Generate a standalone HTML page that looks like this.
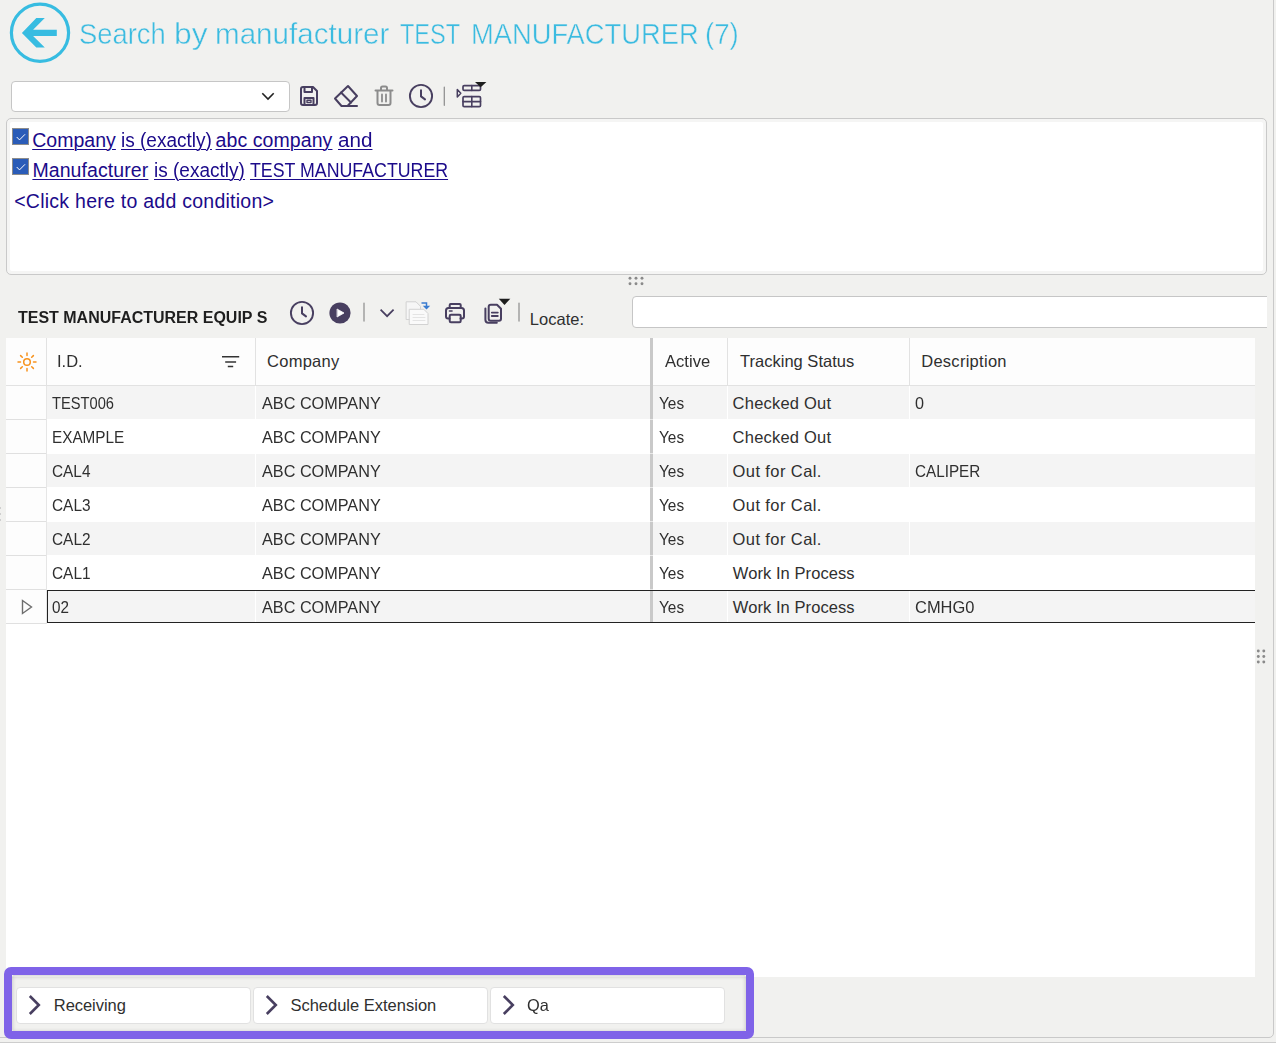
<!DOCTYPE html>
<html lang="en"><head><meta charset="utf-8"><title>Search by manufacturer</title>
<style>
html,body{margin:0;padding:0;}
body{background:#f1f1ef;font-family:"Liberation Sans",sans-serif;overflow:hidden;}
#app{position:relative;width:1276px;height:1043px;overflow:hidden;background:#f1f1ef;}
#app *{box-sizing:border-box;}
.a{position:absolute;}
.t{position:absolute;white-space:nowrap;transform-origin:0 50%;font-family:"Liberation Sans",sans-serif;}
.ttl{color:#3bbbe0;-webkit-text-stroke:0.45px #f1f1ef;}
.lnk{color:#1b0a8a;}
.u{text-decoration:underline;text-decoration-thickness:1px;text-underline-offset:2px;}
.cap{color:#1e1e1e;font-weight:bold;}
.g{color:#2f2f2f;}
.frame{left:-6px;top:-6px;width:1280px;height:1044px;border:1px solid #c9c9c9;border-radius:5px;}
.botline{left:0;top:1042px;width:1276px;height:1px;background:#cdcdcd;}
.dd{left:11px;top:81px;width:279px;height:31px;background:#fff;border:1px solid #c6c6c6;border-radius:4px;}
.cond{left:6px;top:118px;width:1261px;height:157px;background:#f5f5f4;border:1px solid #c9c9c9;border-radius:5px;}
.cond i{position:absolute;left:3px;top:3px;right:3px;bottom:3px;background:#fff;border-radius:2px;}
.cb{width:17px;height:17px;background:#2a5cb8;border:1px solid #8c8c8c;}
.loc{left:632px;top:296px;width:640px;height:32px;background:#fff;border:1px solid #c6c6c6;border-radius:4px;}
.locclip{left:632px;top:290px;width:635px;height:44px;overflow:hidden;}
.grid{left:6px;top:338px;width:1249px;height:639px;background:#fff;}
.hdr{left:0;top:0;width:1249px;height:48px;background:#fdfdfd;border-bottom:1px solid #e2e2e2;}
.vs{top:0;width:1px;height:47px;background:#e2e2e2;}
.row{left:41px;width:1208px;height:33px;}
.alt{background:#f4f4f4;}
.ind{left:0;top:48px;width:40px;height:238px;background:#fdfdfd;}
.indl{left:0;width:40px;height:1px;background:#e0e0e0;}
.freeze{left:644px;top:0;width:3px;height:285px;background:#c9c9c9;}
.sel{left:41px;top:252px;width:1208px;height:33px;border:1px solid #222;border-right:none;}
.pur{left:4px;top:967px;width:750px;height:72px;border:8px solid #7f63e8;border-radius:7px;}
.purin{left:12px;top:975px;width:734px;height:56px;box-shadow:inset 0 1px 4px rgba(0,0,0,.22);border-radius:2px;}
.btn{top:987px;width:235px;height:37px;background:#fff;border:1px solid #e1e1e1;border-radius:4px;}
svg{position:absolute;overflow:visible;}

</style></head>
<body>
<div id="app">
<div class="a frame"></div>
<div class="a botline"></div>

<!-- back button -->
<svg style="left:8px;top:0px;filter:blur(0.45px)" width="66" height="66" viewBox="8 0 66 66">
  <circle cx="40" cy="32.750" r="28.600" fill="none" stroke="#37bce1" stroke-width="3.200"/>
  <path d="M56.800 29.700 H33.100 L44.800 18 H36.300 L21.900 32.900 L36.300 47.500 H44.800 L33.100 36.100 H56.800 Z" fill="#37bce1"/>
</svg>

<!-- dropdown -->
<div class="a dd"></div>
<svg style="left:260px;top:90px" width="16" height="12" viewBox="260 90 16 12"><path d="M262.3 93.2 L268 99 L273.7 93.2" fill="none" stroke="#222" stroke-width="1.6"/></svg>

<!-- toolbar 1 icons -->
<svg style="left:296px;top:80px" width="196" height="32" viewBox="296 80 196 32" fill="none" stroke="#483f60" stroke-width="2" stroke-linejoin="round" stroke-linecap="round">
  <!-- save -->
  <path d="M301 89 a2 2 0 0 1 2 -2 h10 l4 4 v12 a2 2 0 0 1 -2 2 h-12 a2 2 0 0 1 -2 -2 z"/>
  <path d="M304.5 87.5 v4.5 h7.5 v-4.5"/>
  <path d="M304.5 104.5 v-6.5 h9 v6.5"/>
  <rect x="307" y="100.3" width="4" height="2.2" stroke-width="1.4"/>
  <!-- eraser -->
  <path d="M348 86 L357 96 L347.5 106 H341.5 L335 98.5 Z"/>
  <path d="M341 92.5 L351 102.5"/>
  <path d="M347 106 H357"/>
  <!-- trash -->
  <g stroke="#8c8c8c">
  <path d="M375.5 90.5 h17"/>
  <path d="M381 90 v-2 a1.5 1.5 0 0 1 1.5 -1.5 h3 a1.5 1.5 0 0 1 1.5 1.5 v2"/>
  <path d="M377.5 91 v12 a2 2 0 0 0 2 2 h9 a2 2 0 0 0 2 -2 v-12"/>
  <path d="M382 94.5 v7 M386 94.5 v7" stroke-width="1.8"/>
  </g>
  <!-- clock -->
  <circle cx="421" cy="96" r="11.100" stroke-width="1.900"/>
  <path d="M421 90.200 V96.400 L425 99.400" stroke-width="2"/>
  <!-- sep -->
  <path d="M444.3 87 V105.3" stroke="#8f8f8f" stroke-width="1.250"/>
  <!-- table icon -->
  <path d="M457.300 89.500 L460.800 93.300 L457.300 97 Z" stroke-width="1.500" />
  <rect x="463" y="85.6" width="17.5" height="4.8" rx="1.2" stroke-width="1.700"/>
  <path d="M471.8 85.6 v4.8" stroke-width="1.600"/>
  <rect x="463" y="96.6" width="17.5" height="10" rx="1.2" stroke-width="1.700"/>
  <path d="M471.8 96.6 v10 M463 101.6 h17.5" stroke-width="1.600"/>
  <path d="M475 82 H486.4 L480.7 87.2 Z" fill="#1d1d1d" stroke="none"/>
</svg>

<!-- condition box -->
<div class="a cond"><i></i></div>
<div class="a cb" style="left:12px;top:128px"></div>
<div class="a cb" style="left:12px;top:158px"></div>
<svg style="left:12px;top:128px" width="17" height="47" viewBox="0 0 17 47" fill="none" stroke="#fff" stroke-width="1">
  <path d="M4.700 9 L7.500 11.900 L13 6.300"/>
  <path d="M4.700 39 L7.500 41.900 L13 36.300"/>
</svg>

<!-- splitter dots -->
<div class="a" style="left:0;top:507px;width:1px;height:2px;background:#cfcfcf"></div>
<div class="a" style="left:0;top:513px;width:1px;height:2px;background:#cfcfcf"></div>
<div class="a" style="left:0;top:519px;width:1px;height:2px;background:#cfcfcf"></div>
<svg style="left:626px;top:275px" width="20" height="12" viewBox="626 275 20 12" fill="#8a8a8a">
  <circle cx="630" cy="278.3" r="1.450"/><circle cx="636" cy="278.3" r="1.450"/><circle cx="642" cy="278.3" r="1.450"/>
  <circle cx="630" cy="283.8" r="1.450"/><circle cx="636" cy="283.8" r="1.450"/><circle cx="642" cy="283.8" r="1.450"/>
</svg>
<svg style="left:1255px;top:646px" width="12" height="20" viewBox="1255 646 12 20" fill="#8a8a8a">
  <circle cx="1258.3" cy="651" r="1.450"/><circle cx="1263.8" cy="651" r="1.450"/>
  <circle cx="1258.3" cy="656.5" r="1.450"/><circle cx="1263.8" cy="656.5" r="1.450"/>
  <circle cx="1258.3" cy="662" r="1.450"/><circle cx="1263.8" cy="662" r="1.450"/>
</svg>

<!-- toolbar 2 icons -->
<svg style="left:286px;top:296px" width="240" height="32" viewBox="286 296 240 32" fill="none" stroke="#483f60" stroke-width="2" stroke-linejoin="round" stroke-linecap="round">
  <circle cx="302" cy="313" r="11.100" stroke-width="1.900"/>
  <path d="M302 307.200 V313.400 L306 316.400" stroke-width="2"/>
  <circle cx="340" cy="313" r="10.6" fill="#483f60" stroke="none"/>
  <path d="M337.400 309.200 L344 313 L337.400 316.800 Z" fill="#fff" stroke="#fff" stroke-width="0.800"/>
  <path d="M364 303 V321" stroke="#8f8f8f" stroke-width="1.250"/>
  <path d="M380.6 309.6 L387.1 316.2 L393.6 309.6" stroke-width="1.7" stroke-linejoin="miter" stroke-linecap="butt"/>
  <!-- disabled paste -->
  <g stroke="#d2d2d2" stroke-width="1" fill="#f6f6f6">
    <path d="M406.5 301.8 h9.5 l4.5 4.5 v13.2 h-14 z"/>
    <path d="M409.600 309.300 h14.200 l4.200 4.200 v11 h-18.400 z" fill="#fafafa"/>
    <path d="M413 314.5 h11 M413 317.5 h12 M413 320.5 h12" stroke="#e4e4e4"/>
  </g>
  <path d="M421.5 303 h5 v4" stroke="#3a7bd0" stroke-width="1.5" stroke-linecap="butt" stroke-linejoin="miter"/>
  <path d="M422.8 305.8 h7.4 l-3.7 3.6 z" fill="#3a7bd0" stroke="none"/>
  <!-- printer -->
  <path d="M449.700 307.600 v-2.600 a1 1 0 0 1 1 -1 h9 a1 1 0 0 1 1 1 v2.600"/>
  <path d="M449.5 318.5 h-1.5 a2 2 0 0 1 -2 -2 v-6 a2.5 2.5 0 0 1 2.5 -2.5 h13 a2.5 2.5 0 0 1 2.5 2.5 v6 a2 2 0 0 1 -2 2 h-1.500"/>
  <rect x="449.700" y="314.800" width="11" height="7.400" rx="1.300"/>
  <path d="M449.5 311 h2.500" stroke-width="1.600"/>
  <!-- copy -->
  <path d="M485.400 308.600 v11.200 a3 3 0 0 0 3 3 h8.400"/>
  <path d="M488.700 306.700 a2 2 0 0 1 2 -2 h6.300 l4 4 v10 a2 2 0 0 1 -2 2 h-8.300 a2 2 0 0 1 -2 -2 z"/>
  <path d="M491.800 312.600 h6 M491.800 316 h6" stroke-width="1.800"/>
  <path d="M498.800 298.800 H510.300 L504.500 305 Z" fill="#1d1d1d" stroke="none"/>
  <path d="M519 303 V321" stroke="#8f8f8f" stroke-width="1.250"/>
</svg>

<div class="a locclip"><div class="a loc" style="left:0;top:6px"></div></div>

<!-- grid -->
<div class="a grid">
  <div class="a hdr"></div>
  <div class="a vs" style="left:40px"></div>
  <div class="a vs" style="left:249px"></div>
  <div class="a vs" style="left:721px"></div>
  <div class="a vs" style="left:903px"></div>
  <div class="a ind"></div>
  <div class="a row alt" style="top:48px"></div>
  <div class="a row alt" style="top:116px"></div>
  <div class="a row alt" style="top:184px"></div>
  <div class="a row alt" style="top:252px"></div>
  <div class="a indl" style="top:81px"></div>
  <div class="a indl" style="top:115px"></div>
  <div class="a indl" style="top:149px"></div>
  <div class="a indl" style="top:183px"></div>
  <div class="a indl" style="top:217px"></div>
  <div class="a indl" style="top:251px"></div>
  <div class="a indl" style="top:285px"></div>
  <div class="a" style="left:40px;top:48px;width:1px;height:238px;background:#e6e6e6"></div>
  <div class="a" style="left:249px;top:48px;width:1px;height:238px;background:#fff"></div>
  <div class="a" style="left:721px;top:48px;width:1px;height:238px;background:#fff"></div>
  <div class="a" style="left:903px;top:48px;width:1px;height:238px;background:#fff"></div>
  <div class="a freeze"></div>
  <div class="a" style="left:644px;top:81px;width:3px;height:1px;background:#e9e9e9"></div>
  <div class="a" style="left:644px;top:115px;width:3px;height:1px;background:#e9e9e9"></div>
  <div class="a" style="left:644px;top:149px;width:3px;height:1px;background:#e9e9e9"></div>
  <div class="a" style="left:644px;top:183px;width:3px;height:1px;background:#e9e9e9"></div>
  <div class="a" style="left:644px;top:217px;width:3px;height:1px;background:#e9e9e9"></div>
  <div class="a" style="left:644px;top:251px;width:3px;height:1px;background:#e9e9e9"></div>
  
  <div class="a sel"></div>
</div>
<!-- sun icon -->
<svg style="left:15.5px;top:350.5px" width="22" height="22" viewBox="-11 -11 22 22" fill="none" stroke="#f7931e" stroke-width="1.5" stroke-linecap="round">
  <circle cx="0" cy="0" r="3.3"/>
  <path d="M0 -9 V-6.500 M0 9 V6.500 M-9 0 H-6.500 M9 0 H6.500 M-6.400 -6.400 L-4.700 -4.700 M6.400 6.400 L4.700 4.700 M-6.400 6.400 L-4.700 4.700 M6.400 -6.400 L4.700 -4.700"/>
</svg>
<!-- filter icon -->
<svg style="left:220px;top:352px" width="22" height="18" viewBox="220 352 22 18" fill="none" stroke="#333" stroke-width="1.5">
  <path d="M222 356.800 H239.200 M225.200 362 H236.100 M227.800 366.600 H233.200"/>
</svg>
<!-- row indicator -->
<svg style="left:20px;top:598px" width="14" height="18" viewBox="20 598 14 18" fill="none" stroke="#6e6e6e" stroke-width="1.400">
  <path d="M22.500 600.500 L31.500 607 L22.500 613.500 Z"/>
</svg>

<!-- bottom highlighted panel -->
<div class="a purin"></div>
<div class="a btn" style="left:16px"></div>
<div class="a btn" style="left:253px"></div>
<div class="a btn" style="left:490px"></div>
<div class="a pur"></div>
<svg style="left:0;top:990px" width="760" height="30" viewBox="0 990 760 30" fill="none" stroke="#483f60" stroke-width="2.600">
  <path d="M29.800 996 L38.800 1005 L29.800 1014"/>
  <path d="M266.800 996 L275.800 1005 L266.800 1014"/>
  <path d="M503.800 996 L512.800 1005 L503.800 1014"/>
</svg>

<span class="t ttl" style="left:78.80px;top:17px;font-size:30px;line-height:33px;transform:scaleX(0.9131);">Search</span>
<span class="t ttl" style="left:173.80px;top:17px;font-size:30px;line-height:33px;transform:scaleX(1.0603);">by</span>
<span class="t ttl" style="left:214.60px;top:17px;font-size:30px;line-height:33px;transform:scaleX(0.9862);">manufacturer</span>
<span class="t ttl" style="left:400.00px;top:17px;font-size:30px;line-height:33px;transform:scaleX(0.7841);">TEST</span>
<span class="t ttl" style="left:470.60px;top:17px;font-size:30px;line-height:33px;transform:scaleX(0.9106);">MANUFACTURER</span>
<span class="t ttl" style="left:705.00px;top:17px;font-size:30px;line-height:33px;transform:scaleX(0.9216);">(7)</span>
<span class="t lnk u" style="left:32.20px;top:129px;font-size:19.5px;line-height:22px;letter-spacing:0.033px;">Company</span>
<span class="t lnk u" style="left:120.60px;top:129px;font-size:19.5px;line-height:22px;transform:scaleX(0.9759);">is (exactly)</span>
<span class="t lnk u" style="left:215.60px;top:129px;font-size:19.5px;line-height:22px;letter-spacing:0.080px;">abc company</span>
<span class="t lnk u" style="left:337.60px;top:129px;font-size:19.5px;line-height:22px;transform:scaleX(1.0583);">and</span>
<span class="t lnk u" style="left:32.40px;top:159px;font-size:19.5px;line-height:22px;letter-spacing:0.091px;">Manufacturer</span>
<span class="t lnk u" style="left:153.60px;top:159px;font-size:19.5px;line-height:22px;transform:scaleX(0.9759);">is (exactly)</span>
<span class="t lnk u" style="left:249.60px;top:159px;font-size:19.5px;line-height:22px;transform:scaleX(0.9111);">TEST MANUFACTURER</span>
<span class="t lnk" style="left:14.20px;top:190px;font-size:19.5px;line-height:22px;letter-spacing:0.257px;">&lt;Click here to add condition&gt;</span>
<span class="t cap" style="left:18.00px;top:309px;font-size:16px;line-height:17px;transform:scaleX(0.9992);">TEST MANUFACTURER EQUIP S</span>
<span class="t g" style="left:529.80px;top:310px;font-size:16.5px;line-height:18px;letter-spacing:0.033px;">Locate:</span>
<span class="t g" style="left:57.40px;top:352px;font-size:16.5px;line-height:18px;transform:scaleX(1.0009);">I.D.</span>
<span class="t g" style="left:267.00px;top:352px;font-size:16.5px;line-height:18px;letter-spacing:0.267px;">Company</span>
<span class="t g" style="left:665.00px;top:352px;font-size:16.5px;line-height:18px;transform:scaleX(1.0047);">Active</span>
<span class="t g" style="left:740.00px;top:352px;font-size:16.5px;line-height:18px;letter-spacing:0.014px;">Tracking Status</span>
<span class="t g" style="left:921.20px;top:352px;font-size:16.5px;line-height:18px;letter-spacing:0.280px;">Description</span>
<span class="t g" style="left:52.20px;top:394px;font-size:16.5px;line-height:18px;transform:scaleX(0.8887);">TEST006</span>
<span class="t g" style="left:261.60px;top:394px;font-size:16.5px;line-height:18px;transform:scaleX(0.9835);">ABC COMPANY</span>
<span class="t g" style="left:659.00px;top:394px;font-size:16.5px;line-height:18px;transform:scaleX(0.9340);">Yes</span>
<span class="t g" style="left:732.60px;top:394px;font-size:16.5px;line-height:18px;letter-spacing:0.220px;">Checked Out</span>
<span class="t g" style="left:915.40px;top:394px;font-size:16.5px;line-height:18px;transform:scaleX(0.9812);">0</span>
<span class="t g" style="left:52.20px;top:428px;font-size:16.5px;line-height:18px;transform:scaleX(0.9264);">EXAMPLE</span>
<span class="t g" style="left:261.60px;top:428px;font-size:16.5px;line-height:18px;transform:scaleX(0.9835);">ABC COMPANY</span>
<span class="t g" style="left:659.00px;top:428px;font-size:16.5px;line-height:18px;transform:scaleX(0.9340);">Yes</span>
<span class="t g" style="left:732.60px;top:428px;font-size:16.5px;line-height:18px;letter-spacing:0.220px;">Checked Out</span>
<span class="t g" style="left:52.20px;top:462px;font-size:16.5px;line-height:18px;transform:scaleX(0.9321);">CAL4</span>
<span class="t g" style="left:261.60px;top:462px;font-size:16.5px;line-height:18px;transform:scaleX(0.9835);">ABC COMPANY</span>
<span class="t g" style="left:659.00px;top:462px;font-size:16.5px;line-height:18px;transform:scaleX(0.9340);">Yes</span>
<span class="t g" style="left:732.60px;top:462px;font-size:16.5px;line-height:18px;letter-spacing:0.400px;">Out for Cal.</span>
<span class="t g" style="left:914.60px;top:462px;font-size:16.5px;line-height:18px;transform:scaleX(0.9247);">CALIPER</span>
<span class="t g" style="left:52.20px;top:496px;font-size:16.5px;line-height:18px;transform:scaleX(0.9327);">CAL3</span>
<span class="t g" style="left:261.60px;top:496px;font-size:16.5px;line-height:18px;transform:scaleX(0.9835);">ABC COMPANY</span>
<span class="t g" style="left:659.00px;top:496px;font-size:16.5px;line-height:18px;transform:scaleX(0.9340);">Yes</span>
<span class="t g" style="left:732.60px;top:496px;font-size:16.5px;line-height:18px;letter-spacing:0.400px;">Out for Cal.</span>
<span class="t g" style="left:52.20px;top:530px;font-size:16.5px;line-height:18px;transform:scaleX(0.9327);">CAL2</span>
<span class="t g" style="left:261.60px;top:530px;font-size:16.5px;line-height:18px;transform:scaleX(0.9835);">ABC COMPANY</span>
<span class="t g" style="left:659.00px;top:530px;font-size:16.5px;line-height:18px;transform:scaleX(0.9340);">Yes</span>
<span class="t g" style="left:732.60px;top:530px;font-size:16.5px;line-height:18px;letter-spacing:0.400px;">Out for Cal.</span>
<span class="t g" style="left:52.20px;top:564px;font-size:16.5px;line-height:18px;transform:scaleX(0.9327);">CAL1</span>
<span class="t g" style="left:261.60px;top:564px;font-size:16.5px;line-height:18px;transform:scaleX(0.9835);">ABC COMPANY</span>
<span class="t g" style="left:659.00px;top:564px;font-size:16.5px;line-height:18px;transform:scaleX(0.9340);">Yes</span>
<span class="t g" style="left:732.80px;top:564px;font-size:16.5px;line-height:18px;letter-spacing:0.071px;">Work In Process</span>
<span class="t g" style="left:52.00px;top:598px;font-size:16.5px;line-height:18px;transform:scaleX(0.9235);">02</span>
<span class="t g" style="left:261.60px;top:598px;font-size:16.5px;line-height:18px;transform:scaleX(0.9835);">ABC COMPANY</span>
<span class="t g" style="left:659.00px;top:598px;font-size:16.5px;line-height:18px;transform:scaleX(0.9340);">Yes</span>
<span class="t g" style="left:732.80px;top:598px;font-size:16.5px;line-height:18px;letter-spacing:0.071px;">Work In Process</span>
<span class="t g" style="left:914.60px;top:598px;font-size:16.5px;line-height:18px;transform:scaleX(0.9970);">CMHG0</span>
<span class="t g" style="left:53.80px;top:996px;font-size:16.5px;line-height:18px;letter-spacing:-0.050px;">Receiving</span>
<span class="t g" style="left:290.40px;top:996px;font-size:16.5px;line-height:18px;">Schedule Extension</span>
<span class="t g" style="left:526.60px;top:996px;font-size:16.5px;line-height:18px;transform:scaleX(0.9935);">Qa</span>
</div>
</body></html>
